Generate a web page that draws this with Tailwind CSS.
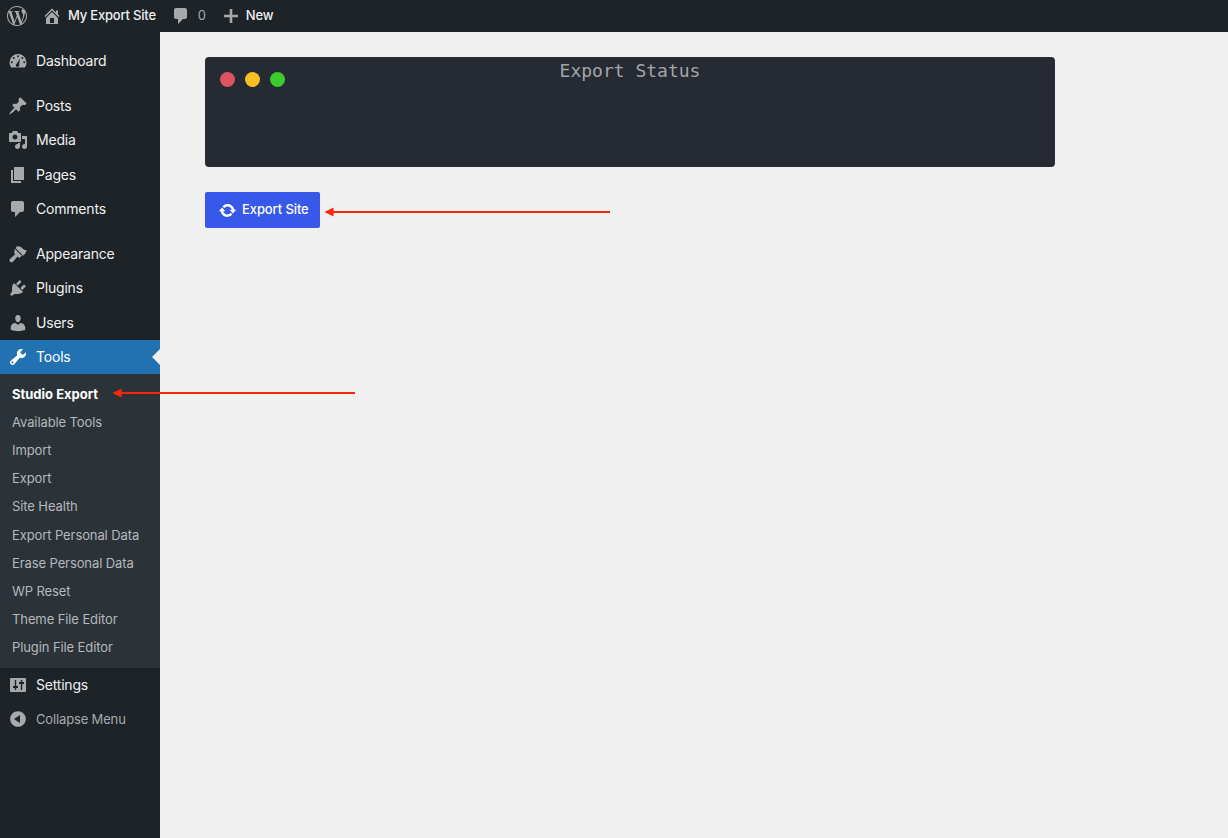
<!DOCTYPE html>
<html lang="en">
  <head>
    <meta charset="UTF-8" />
    <title>Studio Export</title>
    <script src="https://cdn.jsdelivr.net/npm/@tailwindcss/browser@4"></script>
  </head>
  <body class="bg-[#f0f0f1] font-['Inter',sans-serif] overflow-hidden">
    <div class="relative h-[838px] w-[1228px] overflow-hidden">
      <!-- Admin bar -->
      <header class="flex h-8 items-center bg-[#1d2327] text-[13px] font-[450] tracking-[-0.2px] text-[#f0f0f1]">
        <svg class="ml-[7px] h-5 w-5 fill-[#a7aaad]" viewBox="0 0 24 24"><path d="M21.469 6.825c.84 1.537 1.318 3.3 1.318 5.175 0 3.979-2.156 7.456-5.363 9.325l3.295-9.527c.615-1.54.82-2.771.82-3.864 0-.405-.026-.78-.07-1.11m-7.981.105c.647-.03 1.232-.105 1.232-.105.582-.075.514-.93-.067-.899 0 0-1.755.135-2.88.135-1.064 0-2.85-.15-2.85-.15-.585-.03-.661.855-.075.885 0 0 .54.061 1.125.09l1.68 4.605-2.37 7.08L5.354 6.9c.649-.03 1.234-.1 1.234-.1.585-.075.516-.93-.065-.896 0 0-1.746.138-2.874.138-.2 0-.438-.008-.69-.015C4.911 3.15 8.235 1.215 12 1.215c2.809 0 5.365 1.072 7.286 2.833-.046-.003-.091-.009-.141-.009-1.06 0-1.812.923-1.812 1.914 0 .89.513 1.643 1.06 2.531.411.72.89 1.643.89 2.977 0 .915-.354 1.994-.821 3.479l-1.075 3.585-3.9-11.61.001.014zM12 22.784c-1.059 0-2.081-.153-3.048-.437l3.237-9.406 3.315 9.087c.024.053.05.101.078.149-1.12.393-2.325.609-3.582.609M1.211 12c0-1.564.336-3.05.935-4.39L7.29 21.709C3.694 19.96 1.212 16.271 1.211 12M12 0C5.385 0 0 5.385 0 12s5.385 12 12 12 12-5.385 12-12S18.615 0 12 0"/></svg>
        <svg class="ml-[15px] h-5 w-5 fill-[#a7aaad]" viewBox="0 0 20 20"><path d="M16 8.500l1.530 1.530-1.060 1.060L10 4.620l-6.470 6.470-1.060-1.060L10 2.500l4 4v-2h2v4zm-6-2.460l6 5.990V18H4v-5.970zM12 17v-5H8v5h4z"/></svg>
        <span class="ml-[6px]">My Export Site</span>
        <svg class="ml-[15px] h-5 w-5 fill-[#a7aaad]" viewBox="0 0 20 20"><path d="M5 2h9c1.100 0 2 .9 2 2v7c0 1.100-.9 2-2 2h-2l-5 5v-5H5c-1.100 0-2-.9-2-2V4c0-1.100.9-2 2-2z"/></svg>
        <span class="ml-[7px] font-normal text-[#a7aaad]">0</span>
        <svg class="ml-[15px] h-5 w-5 fill-[#a7aaad]" viewBox="0 0 20 20"><path d="M8.700 3h2.600v5.700H17v2.600h-5.700V17H8.700v-5.700H3V8.700h5.700z"/></svg>
        <span class="ml-[5px]">New</span>
      </header>

      <div class="flex h-[806px]">
        <!-- Sidebar -->
        <aside class="w-40 shrink-0 bg-[#1d2327] pt-3 text-sm tracking-[-0.2px] text-[#f0f0f1]">
          <nav>
            <a class="flex h-[34.33px] items-center">
              <svg class="ml-2 h-5 w-5 fill-[#a7aaad]" viewBox="0 0 20 20"><path fill-rule="evenodd" d="M10 3a8.500 8.500 0 0 1 8.500 8.500c0 1.900-.6 3.700-1.700 5H3.200a8.400 8.400 0 0 1-1.700-5A8.500 8.500 0 0 1 10 3zM10 4.300a1 1 0 1 0 0 2 1 1 0 0 0 0-2zM5.700 6a1 1 0 1 0 0 2 1 1 0 0 0 0-2zM14.300 6a1 1 0 1 0 0 2 1 1 0 0 0 0-2zM3.800 10.300a1 1 0 1 0 0 2 1 1 0 0 0 0-2zM16.200 10.300a1 1 0 1 0 0 2 1 1 0 0 0 0-2zM11.800 7.500l-2.900 4.900a1.800 1.800 0 1 0 2.300 1z"/></svg>
              <span class="ml-2">Dashboard</span>
            </a>
            <div class="h-[10.67px]"></div>
            <a class="flex h-[34.33px] items-center">
              <svg class="ml-2 h-5 w-5 fill-[#a7aaad]" viewBox="0 0 20 20"><path d="M10.440 3.020l1.820-1.820 6.360 6.350-1.830 1.820c-1.050-.68-2.480-.57-3.410.36l-.75.75c-.92.93-1.040 2.350-.35 3.410l-1.830 1.820-2.410-2.410-2.800 2.790c-.42.420-3.380 2.710-3.800 2.290s1.860-3.390 2.280-3.810l2.790-2.790L4.100 9.360l1.830-1.820c1.050.69 2.480.570 3.400-.36l.75-.75c.93-.92 1.050-2.350.360-3.410z"/></svg>
              <span class="ml-2">Posts</span>
            </a>
            <a class="flex h-[34.33px] items-center">
              <svg class="ml-2 h-5 w-5 fill-[#a7aaad]" viewBox="0 0 20 20"><path d="M13 11V4c0-.55-.45-1-1-1h-1.670L9 1H5L3.670 3H2c-.55 0-1 .45-1 1v7c0 .55.45 1 1 1h10c.55 0 1-.45 1-1zM7 4.500c1.380 0 2.500 1.120 2.500 2.500S8.380 9.500 7 9.500 4.500 8.380 4.500 7 5.620 4.500 7 4.500zM14 6h5v10.500c0 1.380-1.120 2.500-2.500 2.500S14 17.880 14 16.500s1.120-2.500 2.500-2.500c.17 0 .34.020.5.050V9h-3V6zm-4 8.050V13h2v3.500c0 1.380-1.120 2.500-2.500 2.500S7 17.880 7 16.500 8.120 14 9.500 14c.17 0 .34.020.5.050z"/></svg>
              <span class="ml-2">Media</span>
            </a>
            <a class="flex h-[34.33px] items-center">
              <svg class="ml-2 h-5 w-5 fill-[#a7aaad]" viewBox="0 0 20 20"><path d="M6 15V2h10v13H6zm-1 1h8v2H3V5h2v11z"/></svg>
              <span class="ml-2">Pages</span>
            </a>
            <a class="flex h-[34.33px] items-center">
              <svg class="ml-2 h-5 w-5 fill-[#a7aaad]" viewBox="0 0 20 20"><path d="M5 2h9c1.100 0 2 .9 2 2v7c0 1.100-.9 2-2 2h-2l-5 5v-5H5c-1.100 0-2-.9-2-2V4c0-1.100.9-2 2-2z"/></svg>
              <span class="ml-2">Comments</span>
            </a>
            <div class="h-[10.67px]"></div>
            <a class="flex h-[34.33px] items-center">
              <svg class="ml-2 h-5 w-5 fill-[#a7aaad]" viewBox="0 0 20 20"><path d="M14.480 11.060L7.410 3.990l1.500-1.500c.56-.56 2.300-.47 3.510.32 1.210.8 1.430 1.280 2.660 2.240 1.230.97 2.220 1.160 3.020 1.030.80-.13 0 2.500-1 3.700-1 1.200-2.500 2.200-3.620 2.280zM6.700 4.700l7.070 7.070-1.500 1.500c-.56.56-1.500.56-2.060 0l-.71-.71-4.500 5.200c-.8.8-2.100.8-2.900 0s-.8-2.100 0-2.900l5.200-4.500-.71-.71c-.56-.56-.56-1.500 0-2.060z"/></svg>
              <span class="ml-2">Appearance</span>
            </a>
            <a class="flex h-[34.33px] items-center">
              <svg class="ml-2 h-5 w-5 fill-[#a7aaad]" viewBox="0 0 20 20"><path d="M13.110 4.360L9.870 7.600 8 5.730l3.240-3.240c.35-.34 1.050-.2 1.560.32.520.51.660 1.210.310 1.550zm-8 1.770l.91-1.120 9.010 9.010-1.190.84c-.71.710-2.580 1.160-3.820 1.160H6.140L4.900 17.260c-.59.590-1.540.59-2.120 0-.590-.58-.590-1.530 0-2.120l1.240-1.240v-3.880c0-1.130.52-3.050 1.090-3.890zm7.260 3.970l3.240-3.240c.34-.35 1.040-.21 1.550.31.520.51.660 1.210.310 1.560l-3.240 3.240z"/></svg>
              <span class="ml-2">Plugins</span>
            </a>
            <a class="flex h-[34.33px] items-center">
              <svg class="ml-2 h-5 w-5 fill-[#a7aaad]" viewBox="0 0 20 20"><path d="M10 9.250c-2.270 0-2.730-3.440-2.730-3.440C7 4.020 7.820 2 9.970 2c2.160 0 2.980 2.020 2.710 3.810 0 0-.41 3.440-2.680 3.440zm0 2.570L12.720 10c2.390 0 4.520 2.330 4.520 4.530v2.490s-3.650 1.130-7.240 1.130c-3.650 0-7.240-1.130-7.240-1.130v-2.490c0-2.250 1.940-4.480 4.470-4.480z"/></svg>
              <span class="ml-2">Users</span>
            </a>
            <a class="relative flex h-[34.33px] items-center bg-[#2271b1] text-white">
              <svg class="ml-2 h-5 w-5 fill-white" viewBox="0 0 20 20"><path d="M16.680 9.770c-1.340 1.340-3.300 1.670-4.950.99l-5.410 6.520c-.99.990-2.590.990-3.570 0-.990-.98-.990-2.580 0-3.570l6.520-5.420c-.68-1.650-.35-3.610.99-4.950 1.280-1.280 3.120-1.620 4.720-1.060l-2.890 2.890 2.820 2.820 2.860-2.860c.53 1.580.18 3.410-1.090 4.640zM3.810 16.210c.4.390 1.040.39 1.430 0 .4-.4.400-1.040 0-1.430-.39-.4-1.030-.4-1.430 0-.39.39-.39 1.030 0 1.430z"/></svg>
              <span class="ml-2">Tools</span>
              <span class="absolute right-0 top-[9px] border-y-[8px] border-r-[8px] border-y-transparent border-r-[#f0f0f1]"></span>
            </a>
            <!-- Tools submenu -->
            <ul class="bg-[#2c3338] pb-[6.7px] pt-[6px] text-[13px] tracking-[-0.1px] text-[#b5b8bc]">
              <li class="flex h-[28.1px] items-center pl-3 font-bold tracking-normal text-white">Studio Export</li>
              <li class="flex h-[28.1px] items-center pl-3">Available Tools</li>
              <li class="flex h-[28.1px] items-center pl-3">Import</li>
              <li class="flex h-[28.1px] items-center pl-3">Export</li>
              <li class="flex h-[28.1px] items-center pl-3">Site Health</li>
              <li class="flex h-[28.1px] items-center pl-3">Export Personal Data</li>
              <li class="flex h-[28.1px] items-center pl-3">Erase Personal Data</li>
              <li class="flex h-[28.1px] items-center pl-3">WP Reset</li>
              <li class="flex h-[28.1px] items-center pl-3">Theme File Editor</li>
              <li class="flex h-[28.1px] items-center pl-3">Plugin File Editor</li>
            </ul>
            <a class="flex h-[34px] items-center">
              <svg class="ml-2 h-5 w-5 fill-[#a7aaad]" viewBox="0 0 20 20"><path fill-rule="evenodd" d="M3 3h14a1 1 0 0 1 1 1v12a1 1 0 0 1-1 1H3a1 1 0 0 1-1-1V4a1 1 0 0 1 1-1zM6.800 5h1.400v6H10v2H8.200v2H6.800v-2H5v-2h1.800zM12.800 5h1.400v2H16v2h-1.800v6h-1.400V9H11V7h1.800z"/></svg>
              <span class="ml-2">Settings</span>
            </a>
            <a class="flex h-[34px] items-center text-[13px] tracking-[-0.15px] text-[#a7aaad]">
              <svg class="ml-2 h-5 w-5 fill-[#a7aaad]" viewBox="0 0 20 20"><path d="M10 2.160c4.330 0 7.840 3.510 7.840 7.840s-3.510 7.840-7.840 7.840S2.160 14.330 2.160 10 5.670 2.160 10 2.160zm2 11.840V6l-6 4z"/></svg>
              <span class="ml-2">Collapse Menu</span>
            </a>
          </nav>
        </aside>

        <!-- Content -->
        <main class="flex-1 pl-[45px] pt-[25px]">
          <div class="relative h-[110px] w-[850px] rounded bg-[#262a33] text-center font-['DejaVu_Sans_Mono',monospace] text-lg leading-[28px] text-[#a3a5a8]">
            Export Status
            <div class="absolute left-[15px] top-[15px] flex gap-[10px]">
              <span class="h-[15px] w-[15px] rounded-full bg-[#dc5460]"></span>
              <span class="h-[15px] w-[15px] rounded-full bg-[#f8bf25]"></span>
              <span class="h-[15px] w-[15px] rounded-full bg-[#3bcb2f]"></span>
            </div>
          </div>
          <button class="mt-[25px] flex h-9 w-[115px] items-center rounded-[2px] bg-[#3858e9] pl-[13px] text-[13px] font-[450] tracking-[-0.1px] text-white">
            <svg class="h-[19px] w-[19px] fill-white" viewBox="0 0 20 20"><path d="M10.200 3.280c3.530 0 6.430 2.610 6.920 6h2.080l-3.500 4-3.500-4h2.320c-.45-1.970-2.210-3.440-4.320-3.440-1.450 0-2.730.71-3.540 1.780L4.950 5.660C6.230 4.200 8.110 3.280 10.200 3.280zm-.400 13.440c-3.520 0-6.430-2.610-6.920-6H.800l3.500-4c1.170 1.330 2.330 2.670 3.500 4H5.480c.45 1.970 2.210 3.440 4.320 3.440 1.450 0 2.730-.71 3.540-1.780l1.710 1.960c-1.280 1.460-3.150 2.380-5.250 2.380z"/></svg>
            <span class="ml-[5px]">Export Site</span>
          </button>
        </main>
      </div>

      <!-- Annotation arrows -->
      <svg class="absolute left-[320px] top-[204px] h-4 w-[295px]" viewBox="0 0 295 16"><path d="M4.500 8l9-4.500v3.500h276.500v2H13.500v3.500z" fill="#f7280a"/></svg>
      <svg class="absolute left-[108px] top-[385px] h-4 w-[250px]" viewBox="0 0 250 16"><path d="M4.500 8l9-4.500v3.500h233.500v2H13.500v3.500z" fill="#f7280a"/></svg>
    </div>
  </body>
</html>
